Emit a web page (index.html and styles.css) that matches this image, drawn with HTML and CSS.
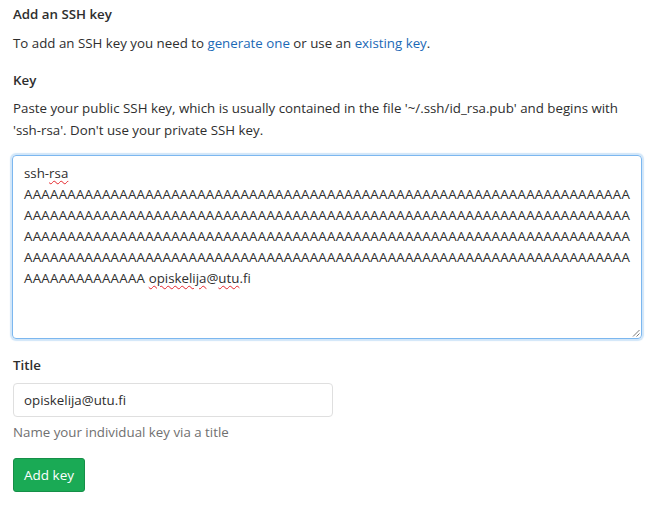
FILE: index.html
```html
<!DOCTYPE html>
<html lang="en">
<head>
<meta charset="utf-8">
<title>Add an SSH key</title>
<link rel="stylesheet" href="styles.css">
</head>
<body>
<form class="ssh-form">
  <h4 class="form-title">Add an SSH key</h4>
  <p class="intro">To add an SSH key you need to <a href="#" class="link">generate one</a> or use an <a href="#" class="link">existing key</a>.</p>

  <div class="form-group">
    <label class="label">Key</label>
    <p class="hint">Paste your public SSH key, which is usually contained in the file '~/.ssh/id_rsa.pub' and begins with 'ssh-rsa'. Don't use your private SSH key.</p>
    <div class="key-input" role="textbox">
      <div class="key-text">ssh-<span class="typo">rsa</span><br><span class="aa">AAAAAAAAAAAAAAAAAAAAAAAAAAAAAAAAAAAAAAAAAAAAAAAAAAAAAAAAAAAAAAAAAAAAAA</span><br><span class="aa">AAAAAAAAAAAAAAAAAAAAAAAAAAAAAAAAAAAAAAAAAAAAAAAAAAAAAAAAAAAAAAAAAAAAAA</span><br><span class="aa">AAAAAAAAAAAAAAAAAAAAAAAAAAAAAAAAAAAAAAAAAAAAAAAAAAAAAAAAAAAAAAAAAAAAAA</span><br><span class="aa">AAAAAAAAAAAAAAAAAAAAAAAAAAAAAAAAAAAAAAAAAAAAAAAAAAAAAAAAAAAAAAAAAAAAAA</span><br><span class="aa">AAAAAAAAAAAAAA</span> <span class="typo">opiskelija</span>@<span class="typo">utu</span>.fi</div>
      <svg class="resize" width="8" height="8" viewBox="0 0 8 8"><path d="M1 7.5L7.5 1M4.5 7.5L7.5 4.5" stroke="#7a7a7a" stroke-width="1" fill="none"/></svg>
    </div>
  </div>

  <div class="form-group">
    <label class="label title-label">Title</label>
    <input class="text-input" type="text" value="opiskelija@utu.fi">
    <p class="help">Name your individual key via a title</p>
  </div>

  <button class="btn-success" type="button">Add key</button>
</form>
</body>
</html>
```
FILE: styles.css
```css
html, body {
  margin: 0;
  background: #fff;
}
body {
  font-family: "Open Sans", "Noto Sans", sans-serif;
  font-size: 13.3px;
  color: #2e2e2e;
}
.ssh-form {
  padding: 4px 13px 0 13px;
  display: flex;
  flex-direction: column;
  align-items: flex-start;
}
.form-title {
  margin: 0;
  font-size: 13.3px;
  font-weight: 600;
  line-height: 20px;
}
.intro {
  margin: 8px 0 0;
  line-height: 22px;
}
.link {
  color: #1b69b6;
  text-decoration: none;
}
.form-group {
  align-self: stretch;
  display: flex;
  flex-direction: column;
  align-items: flex-start;
}
.label {
  margin-top: 16px;
  font-weight: 600;
  line-height: 20px;
}
.hint {
  margin: 7px 0 0;
  line-height: 22px;
  max-width: 625px;
}
.key-input {
  position: relative;
  box-sizing: border-box;
  margin-top: 14px;
  margin-left: -1px;
  width: 630px;
  height: 184px;
  border: 1px solid #7cb7ef;
  border-radius: 4px;
  box-shadow: 0 0 1px 2px rgba(124, 183, 239, 0.35);
  padding: 7px 10px 7px 11px;
  line-height: 21px;
  white-space: nowrap;
  overflow: hidden;
}
.aa {
  letter-spacing: 0.25px;
}
.typo {
  text-decoration: underline wavy #e5262b;
  text-decoration-thickness: 1px;
  text-underline-offset: 2px;
}
.resize {
  position: absolute;
  right: 1px;
  bottom: 1px;
}
.title-label {
  margin-top: 16px;
}
.text-input {
  box-sizing: border-box;
  margin: 8px 0 0;
  width: 320px;
  height: 34px;
  border: 1px solid #dfdfdf;
  border-radius: 4px;
  padding: 0 10px;
  font-family: inherit;
  font-size: 13.3px;
  color: #2e2e2e;
  outline: none;
}
.help {
  margin: 5px 0 0;
  line-height: 20px;
  color: #707070;
}
.btn-success {
  margin-top: 16px;
  box-sizing: border-box;
  height: 34px;
  padding: 0 10px;
  border: 1px solid #168f48;
  border-radius: 3px;
  background: #1aaa55;
  color: #fff;
  font-family: inherit;
  font-size: 13.5px;
  cursor: pointer;
}
```
